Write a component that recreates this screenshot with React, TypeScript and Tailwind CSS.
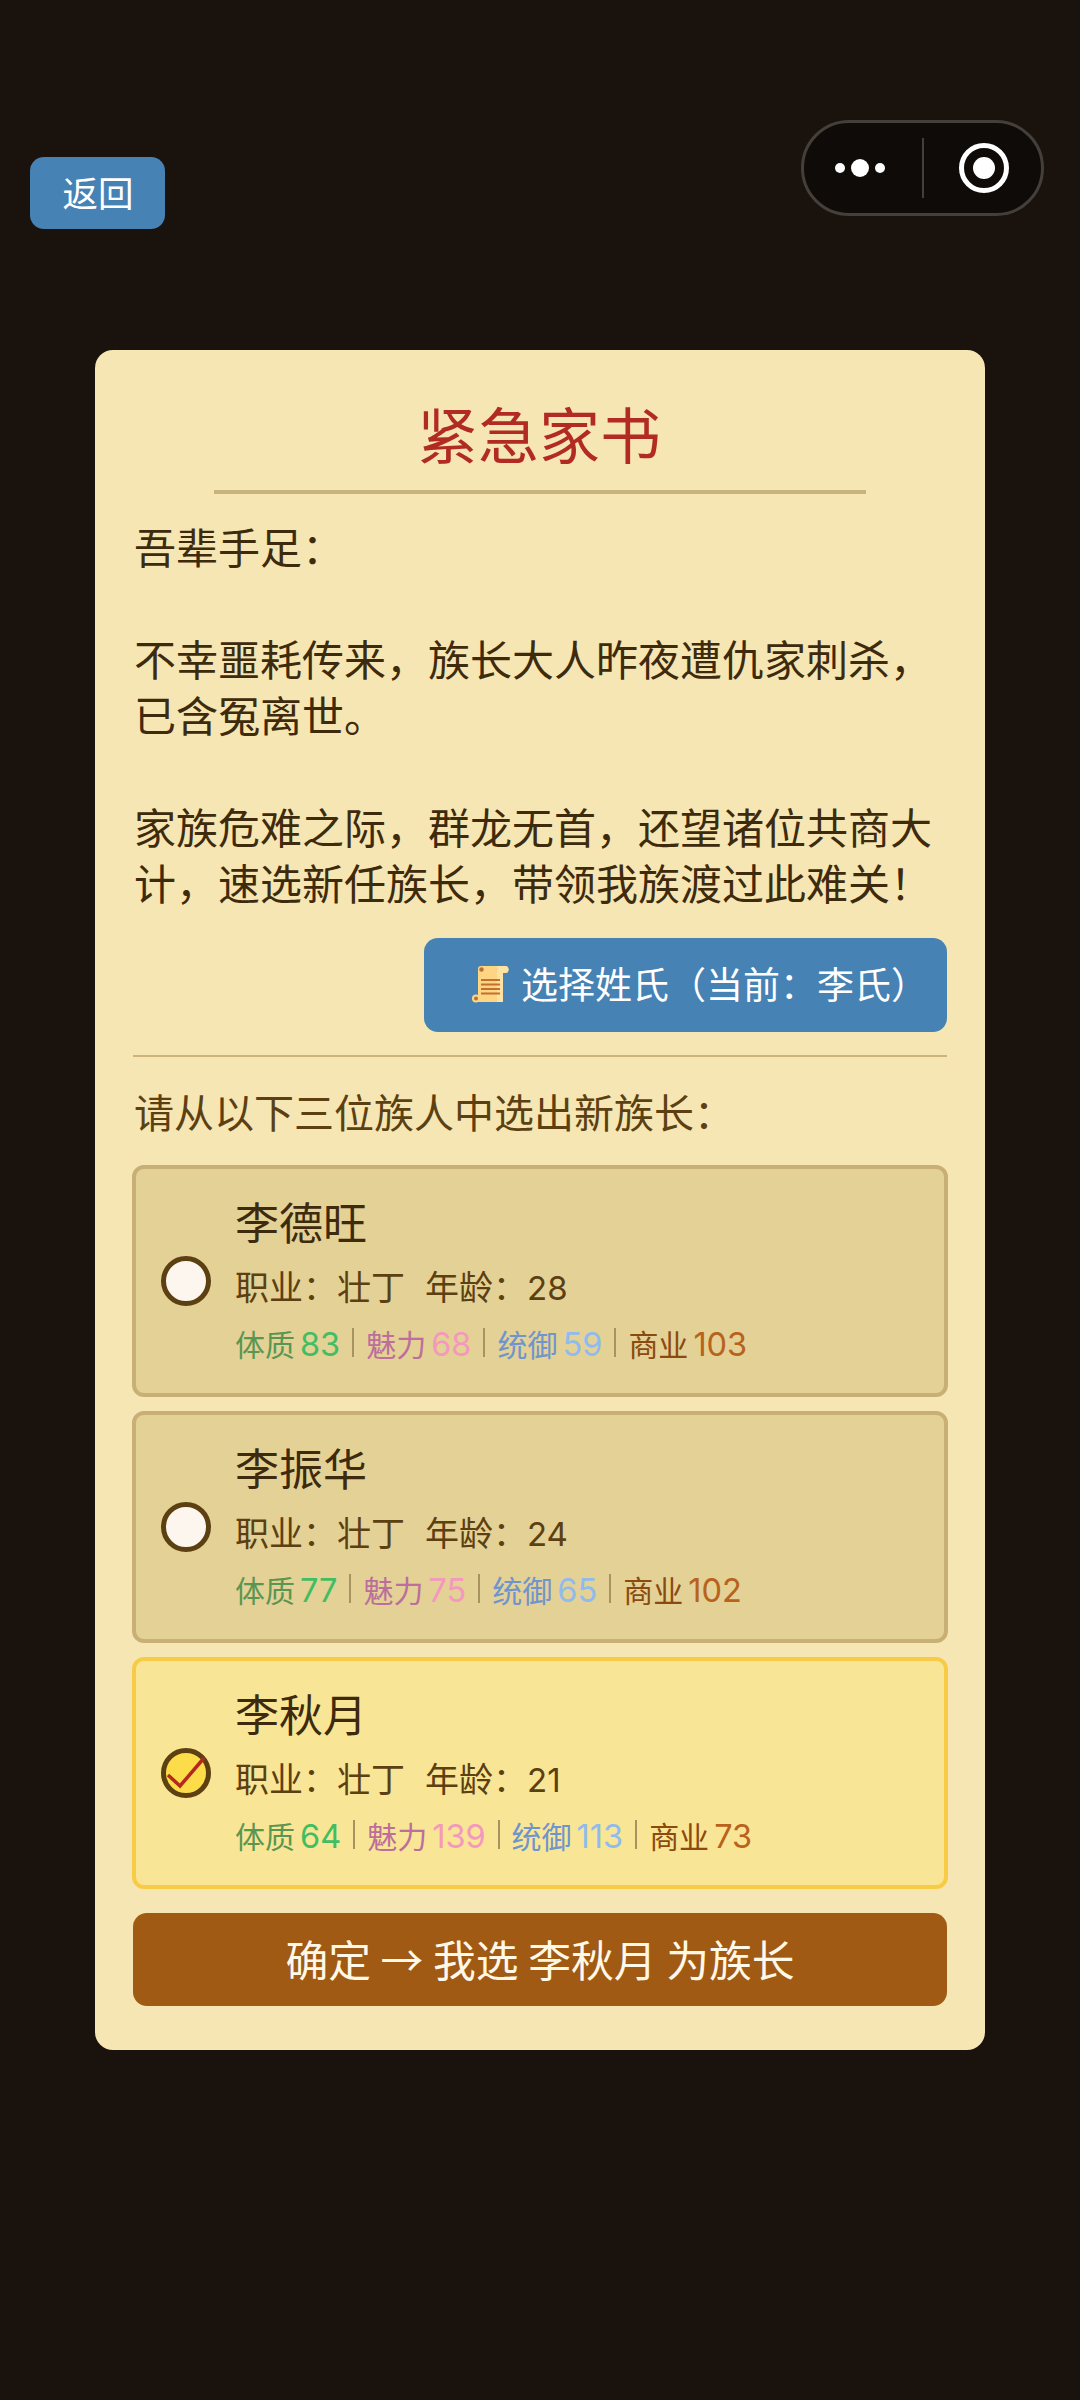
const FONT = "font-['Noto_Sans_CJK_SC','Noto_Sans',sans-serif]";
const DIGITS = "font-['Inter','Noto_Sans_CJK_SC',sans-serif] font-normal";

const people = [
  { name: "李德旺", age: 28, stats: [83, 68, 59, 103], selected: false },
  { name: "李振华", age: 24, stats: [77, 75, 65, 102], selected: false },
  { name: "李秋月", age: 21, stats: [64, 139, 113, 73], selected: true },
];

function Scroll() {
  return (
    <svg width="38" height="37" viewBox="0 0 38 37" className="shrink-0">
      <path d="M10 0h24a3.5 3.5 0 0 1 0 7h-2v26a3 3 0 0 1-3 3H5a3.5 3.5 0 0 1 0-7h2V3a3 3 0 0 1 3-3z" fill="#fdd583" />
      <rect x="26" y="0" width="6" height="36" fill="#fee2a4" />
      <path d="M26 0h8a3.5 3.5 0 0 1 0 7h-8z" fill="#fee2a4" />
      <circle cx="10.5" cy="3.5" r="2.2" fill="#b5713a" />
      <circle cx="5" cy="32.5" r="4" fill="#fdd583" />
      <circle cx="5" cy="32.5" r="2" fill="#b5713a" />
      <path d="M10 14h19M10 18.5h19M10 23h19M10 27.5h19" stroke="#c2702f" strokeWidth="2.2" />
    </svg>
  );
}

function Sep() {
  return <span className="w-[2px] h-[29px] bg-[#a8925f] mx-[12px] self-start mt-[8px]" />;
}

function Stat({ label, value, labelClass, valueClass }: { label: string; value: number; labelClass: string; valueClass: string }) {
  return (
    <span className="flex items-center gap-[5px]">
      <span className={`text-[30px] pb-[4px] ${labelClass}`}>{label}</span>
      <span className={`text-[32.5px] ${DIGITS} ${valueClass}`}>{value}</span>
    </span>
  );
}

function Person({ name, age, stats, selected }: { name: string; age: number; stats: number[]; selected: boolean }) {
  return (
    <div
      className={`-mx-[1px] h-[232px] rounded-[12px] border-[4px] pl-[25px] flex items-center gap-[24px] ${
        selected ? "bg-[#f9e596] border-[#f8cb47]" : "bg-[#e3d196] border-[#c7af75]"
      }`}
    >
      {selected ? (
        <svg width="50" height="50" viewBox="0 0 50 50" className="shrink-0">
          <circle cx="25" cy="25" r="22.5" fill="#fddc4a" stroke="#5c4012" strokeWidth="5" />
          <path d="M7 27l12 11L43 10" fill="none" stroke="#b3291e" strokeWidth="3.5" />
        </svg>
      ) : (
        <span className="w-[50px] h-[50px] rounded-full bg-[#fdf6ee] border-[5px] border-[#5c4012] shrink-0" />
      )}
      <div className="flex flex-col">
        <div className="text-[44px] leading-[56px] text-[#3e2a0c]">{name}</div>
        <div className="text-[34px] leading-[50px] mt-[12px] text-[#5c4012] flex gap-[20px]">
          <span>职业：壮丁</span>
          <span>
            年龄：<span className={`text-[33px] ${DIGITS}`}>{age}</span>
          </span>
        </div>
        <div className="flex items-center leading-[46px] mt-[7px]">
          <Stat label="体质" value={stats[0]} labelClass="text-[#5a9652]" valueClass="text-[#41bd62]" />
          <Sep />
          <Stat label="魅力" value={stats[1]} labelClass="text-[#bc6e9c]" valueClass="text-[#f598bd]" />
          <Sep />
          <Stat label="统御" value={stats[2]} labelClass="text-[#7094cc]" valueClass="text-[#8fbbee]" />
          <Sep />
          <Stat label="商业" value={stats[3]} labelClass="text-[#8a4a10]" valueClass="text-[#b8621c]" />
        </div>
      </div>
    </div>
  );
}

export default function App() {
  return (
    <div className={`relative w-[1080px] h-[2400px] bg-[#1a120c] ${FONT} overflow-hidden`}>
      <div className="absolute left-[801px] top-[120px] w-[243px] h-[96px] rounded-full bg-[#0f0b08] border-[3px] border-[#453f3a] flex items-center">
        <div className="flex items-center justify-center gap-[6px] w-[111px] mr-[7px]">
          <span className="w-[10px] h-[10px] rounded-full bg-white" />
          <span className="w-[18px] h-[18px] rounded-full bg-white" />
          <span className="w-[10px] h-[10px] rounded-full bg-white" />
        </div>
        <span className="w-[2px] h-[60px] bg-[#453f3a]" />
        <div className="flex-1 flex items-center justify-center pl-[3px]">
          <span className="w-[50px] h-[50px] rounded-full border-[5px] border-white flex items-center justify-center">
            <span className="w-[22px] h-[22px] rounded-full bg-white" />
          </span>
        </div>
      </div>

      <div className="pt-[157px] pl-[30px]">
        <button className="w-[135px] h-[72px] rounded-[14px] bg-[#4682b4] text-white text-[35.5px] pb-[2px] pl-[1px] flex items-center justify-center">
          返回
        </button>
      </div>

      <div className="mt-[121px] mx-[95px] w-[890px] h-[1700px] rounded-[18px] bg-[#f5e6b3] px-[38px] flex flex-col">
        <h1 className="pt-[41px] pr-[2px] h-[140px] text-center text-[61px] leading-[84px] text-[#b22a24] font-normal">紧急家书</h1>
        <div className="mx-auto w-[652px] h-[4px] bg-[#c8b37c]" />
        <div className="mt-[24px] pl-[1px] text-[42px] leading-[56px] text-[#3e2a0c] whitespace-pre-line">
          {"吾辈手足：\n\n不幸噩耗传来，族长大人昨夜遭仇家刺杀，已含冤离世。\n\n家族危难之际，群龙无首，还望诸位共商大计，速选新任族长，带领我族渡过此难关！"}
        </div>
        <button className="ml-auto mt-[28px] w-[523px] h-[94px] rounded-[14px] bg-[#4682b4] text-white text-[37px] pl-[28px] pb-[2px] flex items-center justify-center gap-[12px]">
          <Scroll />
          选择姓氏（当前：李氏）
        </button>
        <div className="mt-[23px] h-[2px] bg-[#cdb27a]" />
        <div className="mt-[28px] pl-[1px] text-[40px] leading-[52px] text-[#5c4012]">请从以下三位族人中选出新族长：</div>
        <div className="mt-[28px] flex flex-col gap-[14px]">
          {people.map((p) => (
            <Person key={p.name} {...p} />
          ))}
        </div>
        <button className="mt-[24px] h-[93px] rounded-[14px] bg-[#a05a13] text-[#fff8e7] text-[42.8px] pb-[2px] flex items-center justify-center whitespace-pre">
          确定 → 我选 李秋月 为族长
        </button>
      </div>
    </div>
  );
}
